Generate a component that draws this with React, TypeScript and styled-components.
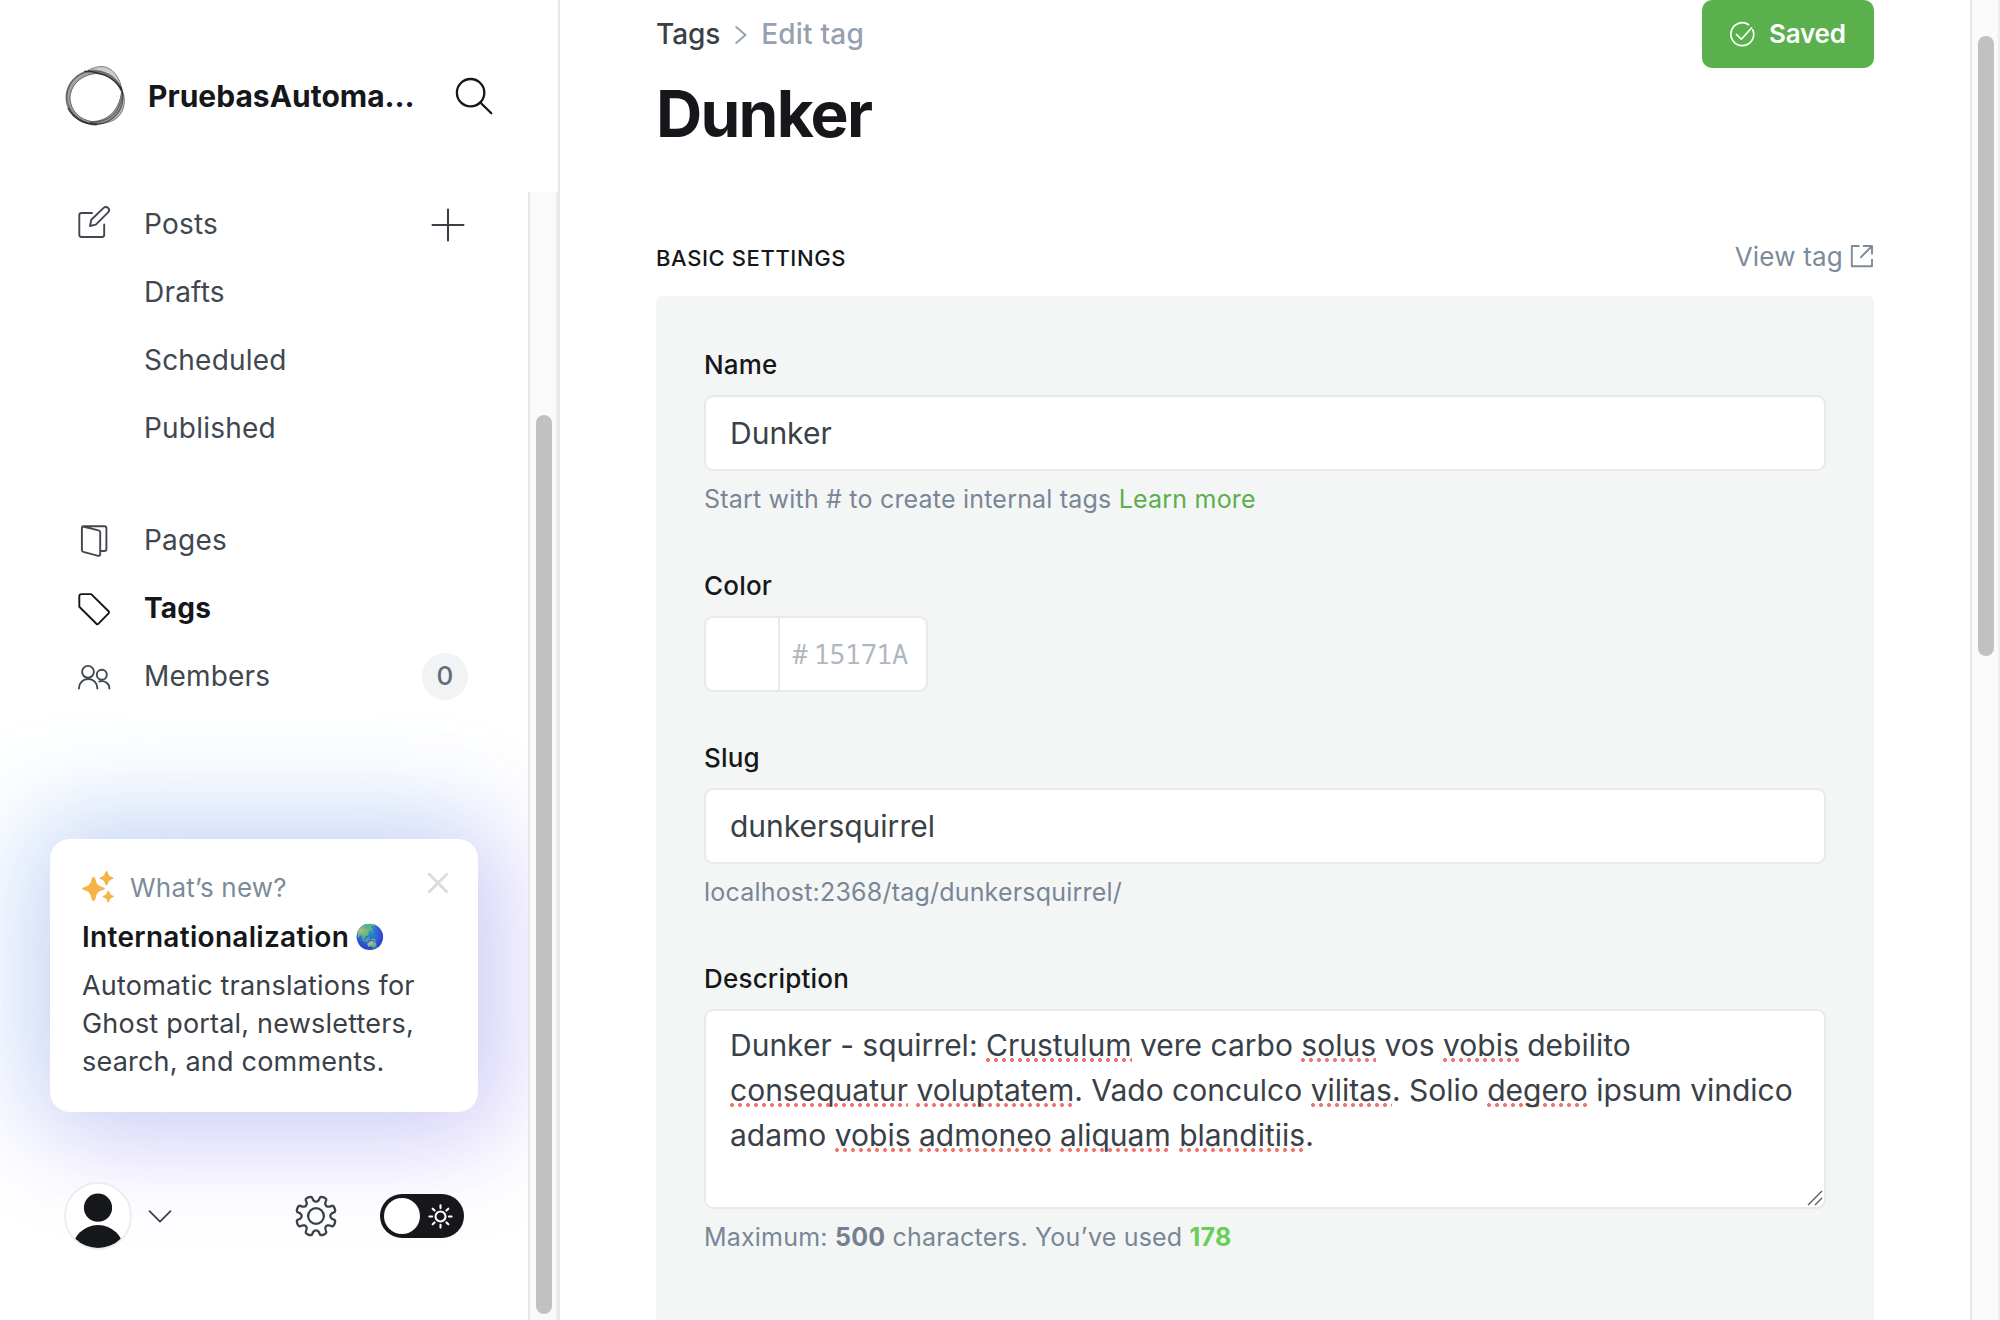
import React from "react";
import styled, { createGlobalStyle, css } from "styled-components";

const color = {
  ink: "#15171a",
  text: "#394047",
  nav: "#40474f",
  muted: "#7c8b9a",
  help: "#788697",
  faint: "#95a1b1",
  green: "#5ab04c",
  line: "#e7eaea",
  panel: "#f4f6f6",
};

const GlobalStyle = createGlobalStyle`
  *, *::before, *::after { box-sizing: border-box; }
  html, body { margin: 0; padding: 0; background: #fff; overflow: hidden; }
  body {
    font-family: Inter, "Liberation Sans", sans-serif;
    color: ${color.text};
    font-size: 28px;
    letter-spacing: 0.2px;
  }
  svg { display: block; flex: none; overflow: visible; }
`;

const Page = styled.div`
  display: flex;
  width: 2000px;
  height: 1320px;
  overflow: hidden;
  background: #fff;
`;

/* ---------- scrollbars ---------- */

const Track = styled.div<{ $side: "nav" | "page" }>`
  flex: none;
  width: 30px;
  background: #fafafa;
  border-left: 2px solid #e8e8e8;
  border-right: 2px solid #ededed;
  padding: ${(p) => (p.$side === "nav" ? "223px 4px 0 6px" : "36px 4px 0 6px")};
`;

const Thumb = styled.div<{ $height: number }>`
  width: 16px;
  height: ${(p) => p.$height}px;
  border-radius: 8px;
  background: #c1c1c1;
`;

/* ---------- sidebar ---------- */

const Sidebar = styled.aside`
  flex: none;
  display: flex;
  flex-direction: column;
  width: 560px;
  border-right: 2px solid #e8e8e8;
`;

const SiteHeader = styled.header`
  flex: none;
  display: flex;
  align-items: center;
  height: 192px;
  padding: 0 65px;
`;

const SiteName = styled.div`
  flex: 1;
  margin-left: 22px;
  font-size: 30px;
  font-weight: 700;
  letter-spacing: 0;
  line-height: 40px;
  white-space: nowrap;
  color: ${color.ink};
`;

const SidebarBody = styled.div`
  flex: 1;
  display: flex;
  min-height: 0;
`;

const NavColumn = styled.nav`
  flex: 1;
  display: flex;
  flex-direction: column;
  overflow: hidden;
`;

const NavList = styled.ul<{ $first?: boolean }>`
  list-style: none;
  margin: ${(p) => (p.$first ? "0 0 44px" : "0")};
  padding: 0;
  & > li:first-child {
    ${(p) => p.$first && css`height: 66px; padding-bottom: 2px;`}
  }
`;

const NavItem = styled.li<{ $active?: boolean }>`
  display: grid;
  grid-template-columns: 32px 1fr auto;
  column-gap: 34px;
  align-items: center;
  height: 68px;
  padding: 0 60px 0 78px;
  color: ${(p) => (p.$active ? color.ink : color.nav)};
  font-weight: ${(p) => (p.$active ? 700 : 400)};
  line-height: 40px;
`;

const NavLabel = styled.span`
  grid-column: 2;
`;

const AddButton = styled.span`
  display: flex;
  padding: 2px 3px 0 0;
`;

const CountBadge = styled.span`
  display: flex;
  align-items: center;
  justify-content: center;
  width: 46px;
  height: 47px;
  border-radius: 50%;
  background: #f1f3f5;
  color: #626d79;
  font-size: 26px;
  font-weight: 500;
`;

const NewsCard = styled.section`
  margin: 129px 50px 0;
  height: 273px;
  padding: 28px 32px 32px;
  border-radius: 20px;
  background: #fff;
  box-shadow:
    -12px -12px 100px 16px rgba(75, 205, 226, 0.21),
    12px 12px 100px 16px rgba(170, 100, 245, 0.3);
`;

const NewsHeader = styled.div`
  display: flex;
  align-items: center;
  height: 40px;
  font-size: 26px;
  color: ${color.muted};
`;

const NewsTag = styled.span`
  flex: 1;
  margin-left: 16px;
`;

const CloseButton = styled.span`
  margin: 0 -2px 9px 0;
`;

const NewsTitle = styled.h3`
  display: flex;
  align-items: center;
  margin: 10px 0 0;
  height: 40px;
  font-size: 28px;
  font-weight: 600;
  letter-spacing: 0.3px;
  color: ${color.ink};
`;

const Emoji = styled.span`
  margin-left: 6px;
  font-size: 24px;
  line-height: 1;
  letter-spacing: 0;
  filter: hue-rotate(14deg) brightness(0.82);
`;

const NewsText = styled.p`
  margin: 10px 0 0;
  font-size: 27px;
  line-height: 38px;
  letter-spacing: 0.2px;
  white-space: nowrap;
`;

const SidebarFooter = styled.footer`
  display: flex;
  align-items: center;
  margin-top: 70px;
  height: 68px;
  padding: 0 64px;
`;

const Spacer = styled.div`
  flex: 1;
`;

const UserMenu = styled.div`
  display: flex;
  align-items: center;
  gap: 16px;
`;

const FooterActions = styled.div`
  display: flex;
  align-items: center;
  gap: 44px;
`;

const ThemeToggle = styled.div`
  display: flex;
  align-items: center;
  justify-content: space-between;
  width: 84px;
  height: 44px;
  padding: 0 11px 0 4px;
  border-radius: 22px;
  background: ${color.ink};
`;

const ToggleKnob = styled.span`
  width: 36px;
  height: 36px;
  border-radius: 50%;
  background: #fff;
`;

/* ---------- main column ---------- */

const Main = styled.main`
  flex: 1;
  display: flex;
  flex-direction: column;
  padding: 0 96px;
  overflow: hidden;
`;

const TopBar = styled.header`
  flex: none;
  display: flex;
  justify-content: space-between;
  height: 68px;
`;

const Breadcrumb = styled.div`
  display: flex;
  align-items: center;
  height: 67px;
  font-weight: 500;
  letter-spacing: -0.1px;
`;

const CrumbCurrent = styled.span`
  letter-spacing: 0.2px;
  color: ${color.faint};
`;

const CrumbArrow = styled.span`
  margin: 3px 14px 0 15px;
`;

const SavedButton = styled.button`
  display: flex;
  align-items: center;
  gap: 14px;
  width: 172px;
  height: 68px;
  padding: 0 28px;
  border: 0;
  border-radius: 10px;
  background: ${color.green};
  color: #fff;
  font: 600 26px/40px Inter, "Liberation Sans", sans-serif;
  letter-spacing: -0.2px;
`;

const Title = styled.h1`
  flex: none;
  margin: 0;
  height: 92px;
  line-height: 92px;
  font-size: 64px;
  font-weight: 700;
  letter-spacing: -1.75px;
  color: ${color.ink};
`;

const SectionHeader = styled.div`
  flex: none;
  display: flex;
  align-items: center;
  justify-content: space-between;
  margin-top: 76px;
  height: 42px;
  margin-bottom: 18px;
`;

const SectionTitle = styled.h4`
  margin: 2px 0 0;
  font-size: 22px;
  font-weight: 500;
  letter-spacing: 0.6px;
  color: ${color.ink};
`;

const ViewLink = styled.a`
  display: flex;
  align-items: center;
  gap: 8px;
  margin-bottom: 1px;
  font-size: 26px;
  color: ${color.muted};
`;

const Panel = styled.section`
  flex: 1;
  display: flex;
  flex-direction: column;
  padding: 48px;
  border-radius: 6px 6px 0 0;
  background: ${color.panel};
`;

const Field = styled.div<{ $gap?: number }>`
  flex: none;
  display: flex;
  flex-direction: column;
  align-items: stretch;
  margin-bottom: ${(p) => p.$gap ?? 46}px;
`;

const Label = styled.label`
  margin-bottom: 10px;
  font-size: 26px;
  line-height: 41px;
  font-weight: 500;
  color: ${color.ink};
`;

const boxed = css`
  border: 2px solid ${color.line};
  border-radius: 9px;
  background: #fff;
`;

const TextInput = styled.input`
  ${boxed}
  width: 100%;
  height: 76px;
  padding: 0 24px;
  outline: none;
  font: 400 30px/45px Inter, "Liberation Sans", sans-serif;
  letter-spacing: 0;
  color: ${color.text};
`;

const ColorBox = styled.div`
  ${boxed}
  display: flex;
  width: 224px;
  height: 76px;
`;

const Swatch = styled.div`
  width: 74px;
  border-right: 2px solid ${color.line};
`;

const ColorValue = styled.div`
  display: flex;
  align-items: center;
  padding-left: 12px;
  font: 400 27px/40px "Noto Sans Mono", "DejaVu Sans Mono", monospace;
  letter-spacing: -0.53px;
  color: #aeb7c1;
`;

const HexDigits = styled.span`
  margin-left: 6px;
`;

const TextArea = styled.div`
  ${boxed}
  position: relative;
  height: 200px;
  padding: 12px 24px;
  font-size: 30px;
  line-height: 45px;
  letter-spacing: 0;
  white-space: pre;
`;

const Misspelt = styled.span`
  background-image: radial-gradient(circle at 2px 2px, #f0766c 1.6px, rgba(240, 118, 108, 0) 2.3px);
  background-size: 8px 4px;
  background-repeat: repeat-x;
  background-position: left bottom 1px;
`;

const ResizeGrip = styled.svg`
  position: absolute;
  right: 1px;
  bottom: 1px;
`;

const Help = styled.p`
  margin: 8px 0 0;
  font-size: 25px;
  line-height: 40px;
  color: ${color.help};
`;

const HelpLink = styled.a`
  color: ${color.green};
`;

const Count = styled.b<{ $ok?: boolean }>`
  font-weight: 700;
  color: ${(p) => (p.$ok ? "#66cf55" : "#748090")};
`;

/* ---------- icons ---------- */

const OrbLogo = () => (
  <svg width="61" height="60" viewBox="65 66 61 60" fill="none">
    <g stroke="#222" strokeWidth="1">
      <path fill="#555" fillOpacity=".55" fillRule="evenodd" strokeOpacity=".6"
        d="M92 70C98 70 106 72 112 76C119 81 122.500 88 123 95C123 112 112 124 94 125C77 123 66.500 112 66 98C66 84 76 72 92 70ZM96 73.500C80 75 70 86 70 99C71 111 80 120 92 121.500C106 121.500 119 112 121.500 92C117 81 108 74.500 96 73.500Z" />
      <path fill="#999" fillOpacity=".5" strokeOpacity=".5"
        d="M88 70.500C92 68 97 66.500 102 66.500C112 67 120.500 77 122 91C117 81 109 75.500 100 74C96 73 92 72 88 70.500Z" />
      <path fill="#777" fillOpacity=".5" strokeOpacity=".5"
        d="M122.500 91C126.500 101 124 112 117 118C110 123.500 100 124.500 90 122.500C103 122 112 118 117 110C121 103 122.500 97 122.500 91Z" />
      <ellipse cx="95" cy="97.500" rx="28" ry="26.300" transform="rotate(15 95 97.500)" strokeOpacity=".45" />
      <path d="M68 108C74 119 84 124 97 124.500M84 71.500C96 71 112 74 122 90" strokeWidth="1.600" strokeOpacity=".75" />
    </g>
  </svg>
);

const SearchIcon = () => (
  <svg width="38" height="38" viewBox="0 0 38 38" fill="none" stroke={color.ink} strokeWidth="2.3" strokeLinecap="round">
    <circle cx="15.6" cy="15.7" r="13.7" />
    <path d="M25.3 25.5L36.3 36.3" />
  </svg>
);

const PostsIcon = () => (
  <svg width="32" height="32" viewBox="78 208 32 32" fill="none" stroke="currentColor" strokeWidth="1.9" strokeLinejoin="round" strokeLinecap="round">
    <path d="M92 213H81.500a2.200 2.200 0 0 0-2.200 2.200V234.800a2.200 2.200 0 0 0 2.200 2.200H102a2.200 2.200 0 0 0 2.200-2.200V224.500" />
    <path d="M90 226L91.300 219.800L103.600 207.900a3.100 3.100 0 0 1 4.500 0a3.200 3.200 0 0 1 0 4.500L95.800 224.600Z" />
  </svg>
);

const PlusIcon = () => (
  <svg width="34" height="34" viewBox="0 0 34 34" stroke={color.text} strokeWidth="2.1" strokeLinecap="round">
    <path d="M17 1.500V32.500M1.500 17H32.500" />
  </svg>
);

const PagesIcon = () => (
  <svg width="32" height="32" viewBox="78 524 32 32" fill="none" stroke="currentColor" strokeWidth="1.900" strokeLinejoin="round">
    <path d="M83 526.500L98.600 530.400a2 2 0 0 1 1.600 2V554.300a1.500 1.500 0 0 1-2 1.500L83.300 551.900a2 2 0 0 1-1.400-1.900V527.500Q81.900 526.200 83.200 526.200H104.400a2 2 0 0 1 2 2V549a2 2 0 0 1-2 2H101" />
  </svg>
);

const TagIcon = () => (
  <svg width="32" height="32" viewBox="78 592 32 32" fill="none" stroke="currentColor" strokeWidth="1.900" strokeLinejoin="round">
    <path d="M81.500 594.100H91.200L108.600 611.300a1.500 1.500 0 0 1 0 2.100L98.500 623.700a1.500 1.500 0 0 1-2.100 0L79.300 606.800V596.300a2.200 2.200 0 0 1 2.200-2.200Z" />
  </svg>
);

const MembersIcon = () => (
  <svg width="32" height="32" viewBox="78 660 32 32" fill="none" stroke="currentColor" strokeWidth="1.900" strokeLinecap="round">
    <circle cx="88" cy="671.800" r="5.900" />
    <path d="M78.900 688.500C78.900 683 83 679 88.200 679S97.400 683 97.400 688.500" />
    <circle cx="101.800" cy="674.700" r="5" />
    <path d="M99.300 681.500C105.500 680 109.400 684 109.400 688.500" />
  </svg>
);

const SparkleIcon = () => (
  <svg width="32" height="32" viewBox="0 0 32 32" fill="#f5b445">
    <path d="M11.500 6Q13.300 6 13.700 9C14.400 13 16.500 15 21 16.200Q23 16.800 23 17.600T21 19C16.500 20.200 14.400 22.500 13.700 27Q13.300 30 11.500 30T9.300 27C8.600 22.500 6.500 20.200 2 19Q0 18.400 0 17.600T2 16.200C6.500 15 8.600 13 9.300 9Q9.700 6 11.500 6Z" />
    <path d="M24.500 0Q25.500 0 26 2C26.500 4.200 28 5.500 30 6.100Q31.500 6.600 31.500 7.200T30 8.300C28 9 26.500 10.300 26 12.500Q25.500 14.400 24.500 14.400T23 12.500C22.500 10.300 21 9 19 8.300Q17.500 7.800 17.500 7.200T19 6.100C21 5.500 22.500 4.200 23 2Q23.500 0 24.500 0Z" />
    <path d="M26.300 19.500Q27 19.500 27.400 21C27.800 22.900 28.800 24 30.500 24.400Q32 24.800 32 25.500T30.500 26.500C28.800 26.900 27.800 28 27.400 29.900Q27 31.500 26.300 31.500T25.200 29.900C24.800 28 23.800 26.900 22.100 26.500Q20.600 26.100 20.600 25.500T22.100 24.400C23.800 24 24.800 22.900 25.200 21Q25.600 19.500 26.300 19.500Z" />
  </svg>
);

const CloseIcon = () => (
  <svg width="20" height="20" viewBox="0 0 20 20" stroke="#dcdcdc" strokeWidth="2.900" strokeLinecap="round">
    <path d="M1.300 1.300L18.700 18.700M18.700 1.300L1.300 18.700" />
  </svg>
);

const Avatar = () => (
  <svg width="68" height="68" viewBox="0 0 68 68">
    <defs>
      <clipPath id="avatar-clip"><circle cx="34" cy="34" r="32" /></clipPath>
    </defs>
    <circle cx="34" cy="34" r="33" fill="#fff" stroke="#ebedf0" strokeWidth="2" />
    <g clipPath="url(#avatar-clip)" fill={color.ink}>
      <circle cx="34" cy="25.700" r="14.100" />
      <circle cx="34" cy="69" r="26" />
    </g>
  </svg>
);

const ChevronDown = () => (
  <svg width="24" height="14" viewBox="0 -.7 24 14" fill="none" stroke={color.text} strokeWidth="1.800" strokeLinecap="round" strokeLinejoin="round">
    <path d="M1.500 1.500L12 12L22.500 1.500" />
  </svg>
);

const ChevronRight = () => (
  <svg width="12" height="18" viewBox="0 0 12 18" fill="none" stroke={color.faint} strokeWidth="1.900" strokeLinecap="round" strokeLinejoin="round">
    <path d="M1.200 1L10.500 9L1.200 17" />
  </svg>
);

// Eight rounded teeth, each given by polar knots that are smoothed through their midpoints.
const gearPath = (() => {
  const knots: [number, number][] = [];
  for (let i = 0; i < 8; i++) {
    const a = 22.5 + i * 45;
    knots.push([a - 22.5, 14], [a - 11.5, 16.3], [a - 10.5, 20.8], [a + 10.5, 20.8], [a + 11.5, 16.3]);
  }
  const pts = knots.map(([a, r]) => {
    const t = (a * Math.PI) / 180;
    return [20 + r * Math.cos(t), 20 + r * Math.sin(t)];
  });
  const mid = (p: number[], q: number[]) => `${((p[0] + q[0]) / 2).toFixed(2)} ${((p[1] + q[1]) / 2).toFixed(2)}`;
  const last = pts[pts.length - 1];
  return (
    `M${mid(last, pts[0])}` +
    pts.map((p, i) => `Q${p[0].toFixed(2)} ${p[1].toFixed(2)} ${mid(p, pts[(i + 1) % pts.length])}`).join("") +
    "Z"
  );
})();

const GearIcon = () => (
  <svg width="40" height="40" viewBox="-.3 -.3 40.600 40.600" fill="none" stroke={color.text} strokeWidth="2.300">
    <path d={gearPath} />
    <circle cx="20" cy="20" r="8" />
  </svg>
);

const SunIcon = () => (
  <svg width="25" height="25" viewBox="-12.500 -12.500 25 25" fill="none" stroke="#fff" strokeWidth="2.100" strokeLinecap="round">
    <circle r="5" />
    {[0, 45, 90, 135, 180, 225, 270, 315].map((a) => (
      <path key={a} d="M8.400 0H11.100" transform={`rotate(${a})`} />
    ))}
  </svg>
);

const CheckIcon = () => (
  <svg width="25" height="25" viewBox="0 0 25 25" fill="none" stroke="#fff" strokeWidth="1.700" strokeLinecap="round" strokeLinejoin="round">
    <path d="M18.600 2.700A11.400 11.400 0 1 0 22.800 7.800" />
    <path d="M6.500 12.500L11.300 17.200L21.500 6" />
  </svg>
);

const ExternalIcon = () => (
  <svg width="23" height="23" viewBox="1 0 23 23" fill="none" stroke={color.muted} strokeWidth="1.900" strokeLinejoin="round">
    <path d="M9.500 1H1.800V21.300H22V14M13 1H22V9.500M10.300 12.800L21.500 1.500" />
  </svg>
);

/* ---------- content ---------- */

type Piece = [string, boolean?];

const description: Piece[][] = [
  [["Dunker - squirrel: "], ["Crustulum", true], [" vere carbo "], ["solus", true], [" vos "], ["vobis", true], [" debilito"]],
  [["consequatur", true], [" "], ["voluptatem", true], [". Vado conculco "], ["vilitas", true], [". Solio "], ["degero", true], [" ipsum vindico"]],
  [["adamo "], ["vobis", true], [" "], ["admoneo", true], [" "], ["aliquam", true], [" "], ["blanditiis", true], ["."]],
];

export default function App() {
  return (
    <Page>
      <GlobalStyle />
      <Sidebar>
        <SiteHeader>
          <OrbLogo />
          <SiteName>PruebasAutoma…</SiteName>
          <SearchIcon />
        </SiteHeader>
        <SidebarBody>
          <NavColumn>
            <NavList $first>
              <NavItem>
                <PostsIcon />
                <NavLabel>Posts</NavLabel>
                <AddButton><PlusIcon /></AddButton>
              </NavItem>
              {["Drafts", "Scheduled", "Published"].map((label) => (
                <NavItem key={label}><NavLabel>{label}</NavLabel></NavItem>
              ))}
            </NavList>
            <NavList>
              <NavItem><PagesIcon /><NavLabel>Pages</NavLabel></NavItem>
              <NavItem $active><TagIcon /><NavLabel>Tags</NavLabel></NavItem>
              <NavItem><MembersIcon /><NavLabel>Members</NavLabel><CountBadge>0</CountBadge></NavItem>
            </NavList>
            <NewsCard>
              <NewsHeader>
                <SparkleIcon />
                <NewsTag>What’s new?</NewsTag>
                <CloseButton><CloseIcon /></CloseButton>
              </NewsHeader>
              <NewsTitle>Internationalization<Emoji>🌏</Emoji></NewsTitle>
              <NewsText>
                Automatic translations for<br />
                Ghost portal, newsletters,<br />
                search, and comments.
              </NewsText>
            </NewsCard>
            <SidebarFooter>
              <UserMenu><Avatar /><ChevronDown /></UserMenu>
              <Spacer />
              <FooterActions>
                <GearIcon />
                <ThemeToggle><ToggleKnob /><SunIcon /></ThemeToggle>
              </FooterActions>
            </SidebarFooter>
          </NavColumn>
          <Track $side="nav"><Thumb $height={899} /></Track>
        </SidebarBody>
      </Sidebar>

      <Main>
        <TopBar>
          <Breadcrumb>
            <span>Tags</span>
            <CrumbArrow><ChevronRight /></CrumbArrow>
            <CrumbCurrent>Edit tag</CrumbCurrent>
          </Breadcrumb>
          <SavedButton><CheckIcon />Saved</SavedButton>
        </TopBar>
        <Title>Dunker</Title>
        <SectionHeader>
          <SectionTitle>BASIC SETTINGS</SectionTitle>
          <ViewLink>View tag<ExternalIcon /></ViewLink>
        </SectionHeader>
        <Panel>
          <Field>
            <Label>Name</Label>
            <TextInput defaultValue="Dunker" />
            <Help>Start with # to create internal tags <HelpLink>Learn more</HelpLink></Help>
          </Field>
          <Field $gap={45}>
            <Label>Color</Label>
            <ColorBox>
              <Swatch />
              <ColorValue>#<HexDigits>15171A</HexDigits></ColorValue>
            </ColorBox>
          </Field>
          <Field>
            <Label>Slug</Label>
            <TextInput defaultValue="dunkersquirrel" />
            <Help>localhost:2368/tag/dunkersquirrel/</Help>
          </Field>
          <Field>
            <Label>Description</Label>
            <TextArea>
              {description.map((line, i) => (
                <div key={i}>
                  {line.map(([text, bad], j) => (bad ? <Misspelt key={j}>{text}</Misspelt> : text))}
                </div>
              ))}
              <ResizeGrip width="16" height="16" viewBox="0 0 16 16" stroke="#5c5c5c" strokeWidth="1.4">
                <path d="M1 15L15 1M8 15L15 8" />
              </ResizeGrip>
            </TextArea>
            <Help>Maximum: <Count>500</Count> characters. You’ve used <Count $ok>178</Count></Help>
          </Field>
        </Panel>
      </Main>
      <Track $side="page"><Thumb $height={620} /></Track>
    </Page>
  );
}
